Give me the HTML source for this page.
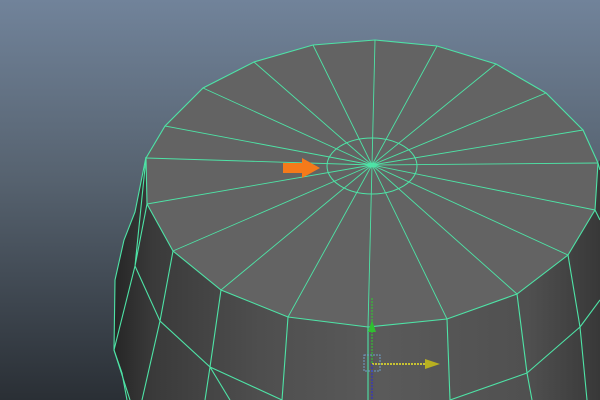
<!DOCTYPE html>
<html><head><style>
html,body{margin:0;padding:0;width:600px;height:400px;overflow:hidden}
</style></head><body>
<svg width="600" height="400" viewBox="0 0 600 400" xmlns="http://www.w3.org/2000/svg">
<defs>
<linearGradient id="bg" x1="0" y1="0" x2="0" y2="1">
<stop offset="0" stop-color="#71839a"/>
<stop offset="0.45" stop-color="#56626f"/>
<stop offset="1" stop-color="#2a2f35"/>
</linearGradient>
<linearGradient id="side" x1="0" y1="0" x2="1" y2="0">
<stop offset="0" stop-color="#262626"/>
<stop offset="0.08" stop-color="#3a3a3a"/>
<stop offset="0.3" stop-color="#4e4e4e"/>
<stop offset="0.55" stop-color="#5a5a5a"/>
<stop offset="0.85" stop-color="#505050"/>
<stop offset="1" stop-color="#383838"/>
</linearGradient>
</defs>
<rect width="600" height="400" fill="url(#bg)"/>
<polygon points="146,157 135,212 124,240 115,280 114,350 122,373 127,400 600,400 600,160 598,163" fill="url(#side)"/>
<polygon points="375,40 437,46 496,64 546,93 583,130 598,163 595,210 568,255 517,294 447,319 368,327 288,317 221,290 173,251 147,204 146,158 165,126 203,88 254,62 313,45" fill="#636363"/>
<g stroke="#4ee3a6" stroke-width="1.1" fill="none">
<polygon points="375,40 437,46 496,64 546,93 583,130 598,163 595,210 568,255 517,294 447,319 368,327 288,317 221,290 173,251 147,204 146,158 165,126 203,88 254,62 313,45"/>
<ellipse cx="372" cy="166" rx="45" ry="28" stroke-width="1"/>
<path d="M372,165L375,40M372,165L437,46M372,165L496,64M372,165L546,93M372,165L583,130M372,165L598,163M372,165L595,210M372,165L568,255M372,165L517,294M372,165L447,319M372,165L368,327M372,165L288,317M372,165L221,290M372,165L173,251M372,165L147,204M372,165L146,158M372,165L165,126M372,165L203,88M372,165L254,62M372,165L313,45" stroke-width="0.9"/>
<path d="M146,157L135,212L124,240L115,280L114,350L122,373L127,400"/>
<path d="M146,158L135,266L114,350M135,266L160,321L142,400M147,204L135,266M173,251L160,321L210,367L230,400M221,290L210,367L205,400M288,317L282,400M210,367L282,400M368,327L368,400M447,319L450,400M517,294L527,373L532,400M527,373L450,400M568,255L580,327L587,400M580,327L527,373M598,163L600,170M595,210L600,220M580,327L600,300M114,350L130,400"/>
</g>
<polygon points="283,163 302,163 302,158 320,168 302,178 302,173 283,173" fill="#f57a1a"/>
<line x1="372" y1="298" x2="372" y2="363" stroke="#2bd12b" stroke-width="1" stroke-dasharray="2,1"/>
<polygon points="372,320 368,332 376,332" fill="#2fc02f"/>
<line x1="372" y1="364" x2="425" y2="364" stroke="#c8c232" stroke-width="2" stroke-dasharray="2,1"/>
<polygon points="425,359 440,364 425,369" fill="#b8b020"/>
<rect x="364" y="355" width="16" height="16" fill="none" stroke="#6fa0c8" stroke-width="1" stroke-dasharray="2,1"/>
<line x1="372" y1="364" x2="372" y2="400" stroke="#2a2ad8" stroke-width="1" stroke-dasharray="2,1"/>
</svg>
</body></html>
